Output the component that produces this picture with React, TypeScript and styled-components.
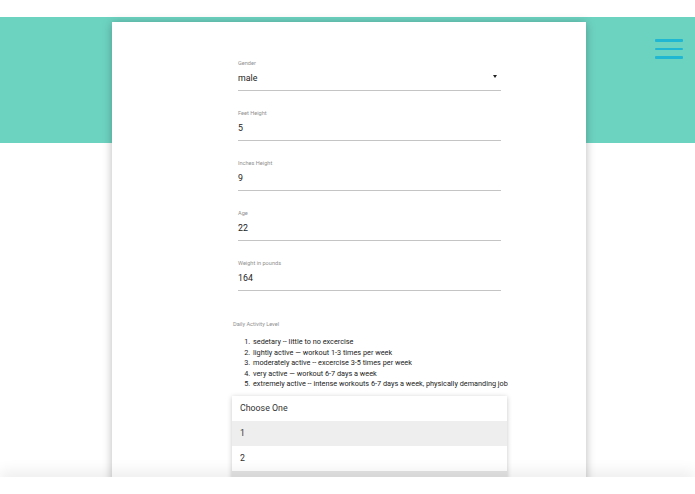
import styled, { createGlobalStyle } from "styled-components";

const GlobalStyle = createGlobalStyle`
    html, body {
        margin: 0;
        padding: 0;
        background: #ffffff;
    }
    body {
        font-family: Roboto, "Helvetica Neue", Arial, sans-serif;
        color: #212121;
    }
`;

const Stage = styled.div`
    height: 477px;
    overflow: hidden;
    display: flex;
    align-items: flex-start;
    background: linear-gradient(
        to bottom,
        #ffffff 0,
        #ffffff 17px,
        #6dd3c1 17px,
        #6dd3c1 143px,
        #ffffff 143px
    );
`;

const Footer = styled.div`
    height: 17px;
    background: #ffffff;
    position: relative;
    box-shadow: 0 -6px 14px rgba(0, 0, 0, 0.07);
`;

const Card = styled.div`
    margin: 22px 0 0 112px;
    width: 474px;
    min-height: 520px;
    background: #ffffff;
    box-shadow: 0 1px 9px rgba(0, 0, 0, 0.28);
    padding-top: 37px;
    box-sizing: border-box;
`;

const Menu = styled.button`
    margin: 39px 12px 0 auto;
    width: 28px;
    padding: 0;
    border: 0;
    background: none;
    display: flex;
    flex-direction: column;
    gap: 6px;
`;

const MenuLine = styled.span`
    display: block;
    height: 2.5px;
    background: #1fb7d1;
    border-radius: 1px;
`;

const Form = styled.div`
    margin-left: 126px;
    width: 263px;
`;

const Field = styled.div`
    margin-bottom: 18px;
`;

const Label = styled.div<{ $shift?: number }>`
    font-size: 5.6px;
    line-height: 8px;
    color: #8f8f8f;
    margin-left: ${(p) => -(p.$shift ?? 0)}px;
`;

const Value = styled.div`
    margin-top: 5px;
    font-size: 8.8px;
    line-height: 12px;
    color: #1c1c1c;
    padding-bottom: 6px;
    border-bottom: 1px solid #c4c4c4;
    display: flex;
    align-items: center;
    justify-content: space-between;
`;

const Caret = styled.span`
    width: 0;
    height: 0;
    margin: -4px 4px 0 0;
    border-left: 2.5px solid transparent;
    border-right: 2.5px solid transparent;
    border-top: 3px solid #212121;
`;

const Activity = styled.div`
    margin-top: 29px;
`;

const Levels = styled.ol`
    margin: 9px 0 0 0;
    padding: 0 0 0 14px;
    font-size: 7.3px;
    line-height: 10.5px;
    color: #222222;
    white-space: nowrap;
    li {
        padding-left: 1px;
    }
`;

const Options = styled.div`
    margin: 6px 0 0 -6px;
    width: 275px;
    background: #ffffff;
    box-shadow: 0 1px 5px rgba(0, 0, 0, 0.22);
`;

const Option = styled.div<{ $shade?: string }>`
    height: 25px;
    padding-left: 8px;
    display: flex;
    align-items: center;
    font-size: 8.8px;
    color: #333333;
    background: ${(p) => p.$shade ?? "#ffffff"};
`;

const fields = [
    { label: "Gender", value: "male", select: true },
    { label: "Feet Height", value: "5" },
    { label: "Inches Height", value: "9" },
    { label: "Age", value: "22" },
    { label: "Weight in pounds", value: "164" },
];

const levels = [
    "sedetary -- little to no excercise",
    "lightly active \u2014 workout 1-3 times per week",
    "moderately active -- excercise 3-5 times per week",
    "very active \u2014 workout 6-7 days a week",
    "extremely active -- intense workouts 6-7 days a week, physically demanding job",
];

// last row is only partly in view, its label is below the fold
const options = [
    { key: "choose", text: "Choose One" },
    { key: "1", text: "1", shade: "#eeeeee" },
    { key: "2", text: "2" },
    { key: "3", text: "", shade: "#e4e4e4" },
];

export default function App() {
    return (
        <>
            <GlobalStyle />
            <Stage>
                {/* Form card over the teal band */}
                <Card>
                    <Form>
                        {fields.map((f) => (
                            <Field key={f.label}>
                                <Label>{f.label}</Label>
                                <Value>
                                    <span>{f.value}</span>
                                    {f.select && <Caret />}
                                </Value>
                            </Field>
                        ))}

                        <Activity>
                            <Label $shift={5}>Daily Activity Level</Label>
                            <Levels>
                                {levels.map((l) => (
                                    <li key={l}>{l}</li>
                                ))}
                            </Levels>
                            <Options>
                                {options.map((o) => (
                                    <Option key={o.key} $shade={o.shade}>
                                        {o.text}
                                    </Option>
                                ))}
                            </Options>
                        </Activity>
                    </Form>
                </Card>

                <Menu aria-label="menu">
                    <MenuLine />
                    <MenuLine />
                    <MenuLine />
                </Menu>
            </Stage>
            <Footer />
        </>
    );
}
